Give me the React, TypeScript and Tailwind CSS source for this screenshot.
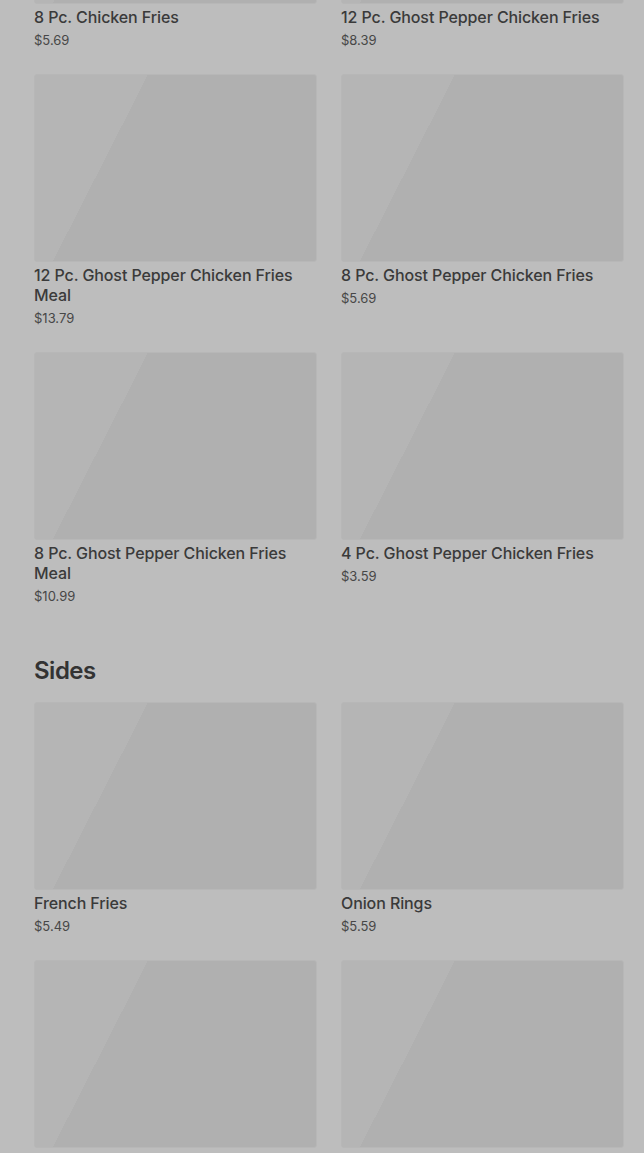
import React from 'react';

type Item = { name: string; price: string };

const CHICKEN_FRIES: Item[] = [
  { name: '8 Pc. Chicken Fries', price: '$5.69' },
  { name: '12 Pc. Ghost Pepper Chicken Fries', price: '$8.39' },
  { name: '12 Pc. Ghost Pepper Chicken Fries Meal', price: '$13.79' },
  { name: '8 Pc. Ghost Pepper Chicken Fries', price: '$5.69' },
  { name: '8 Pc. Ghost Pepper Chicken Fries Meal', price: '$10.99' },
  { name: '4 Pc. Ghost Pepper Chicken Fries', price: '$3.59' },
];

const SIDES: Item[] = [
  { name: 'French Fries', price: '$5.49' },
  { name: 'Onion Rings', price: '$5.59' },
  { name: '8 Pc. Mozzarella Sticks', price: '$4.99' },
  { name: 'Hash Brown Rounds', price: '$2.49' },
];

function MenuCard({ item }: { item: Item }) {
  return (
    <div className="flex flex-col">
      {/* image placeholder, still loading */}
      <div className="h-[188px] w-full rounded-[3px] border border-[#b7b7b7] bg-[linear-gradient(117deg,#b5b5b5_30%,#b0b0b0_30%)]" />
      <p className="mt-[3px] text-[16px] leading-[20px] font-medium tracking-[-0.1px] text-[#3a3a3a]">{item.name}</p>
      <p className="mt-[3px] text-[13px] leading-[20px] text-[#474747]">{item.price}</p>
    </div>
  );
}

function MenuGrid({ items }: { items: Item[] }) {
  return (
    <div className="grid grid-cols-2 gap-x-6 gap-y-6">
      {items.map((item) => (
        <MenuCard key={item.name} item={item} />
      ))}
    </div>
  );
}

export default function App() {
  return (
    <div className="h-[1153px] w-full overflow-hidden bg-[#bdbdbd] font-['Inter',sans-serif]">
      {/* page is scrolled; first row's image sits above the fold */}
      <div className="-mt-[184px] pl-[34px] pr-[20px]">
        <MenuGrid items={CHICKEN_FRIES} />

        <h2 className="mt-[49px] mb-[15px] text-[24px] leading-[32px] font-semibold tracking-[-0.5px] text-[#333333]">Sides</h2>
        <MenuGrid items={SIDES} />
      </div>
    </div>
  );
}
